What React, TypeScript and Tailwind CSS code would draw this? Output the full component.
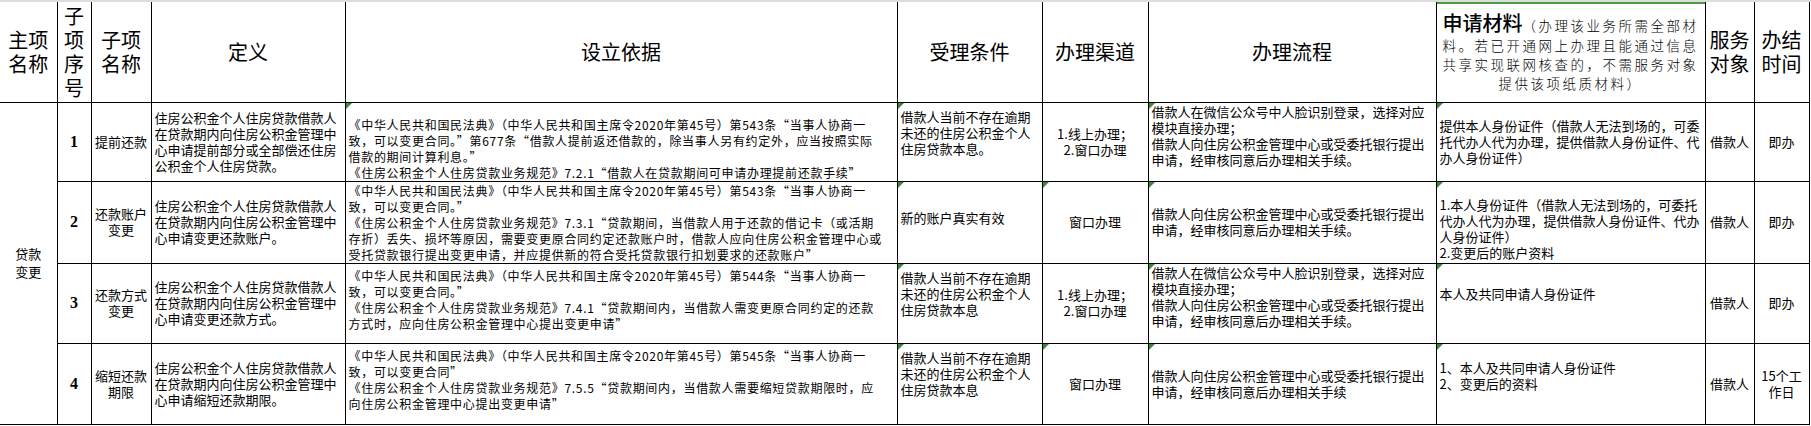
import React from "react";

const sans = "font-['Noto_Sans_CJK_SC','Noto_Sans',sans-serif]";

function Mark() {
  return (
    <span className="absolute left-0 top-0 h-0 w-0 border-t-[6px] border-r-[6px] border-t-[#3a8a35] border-r-transparent" />
  );
}

function Lines({ lines }: { lines: string[] }) {
  return (
    <>
      {lines.map((l, i) => (
        <div key={i} className="whitespace-nowrap">
          {l}
        </div>
      ))}
    </>
  );
}

type Row = {
  no: string;
  name: string[];
  def: string[];
  basis: string[];
  basisAlign: string;
  cond: string[];
  channel: string[];
  channelMark: boolean;
  flow: string[];
  flowAlign: string;
  material: string[];
  matAlign: string;
  time: string[];
  h: string;
};

const rows: Row[] = [
  {
    no: "1",
    name: ["提前还款"],
    def: [
      "住房公积金个人住房贷款借款人",
      "在贷款期内向住房公积金管理中",
      "心申请提前部分或全部偿还住房",
      "公积金个人住房贷款。",
    ],
    basis: [
      "《中华人民共和国民法典》（中华人民共和国主席令2020年第45号）第543条“当事人协商一",
      "致，可以变更合同。”第677条“借款人提前返还借款的，除当事人另有约定外，应当按照实际",
      "借款的期间计算利息。”",
      "《住房公积金个人住房贷款业务规范》7.2.1“借款人在贷款期间可申请办理提前还款手续”",
    ],
    basisAlign: "align-bottom",
    cond: ["借款人当前不存在逾期", "未还的住房公积金个人", "住房贷款本息。"],
    channel: ["1.线上办理；", "2.窗口办理"],
    channelMark: false,
    flow: [
      "借款人在微信公众号中人脸识别登录，选择对应",
      "模块直接办理；",
      "借款人向住房公积金管理中心或受委托银行提出",
      "申请，经审核同意后办理相关手续。",
    ],
    flowAlign: "align-top",
    material: [
      "提供本人身份证件（借款人无法到场的，可委",
      "托代办人代为办理，提供借款人身份证件、代",
      "办人身份证件）",
    ],
    matAlign: "align-middle",
    time: ["即办"],
    h: "h-[79px]",
  },
  {
    no: "2",
    name: ["还款账户", "变更"],
    def: [
      "住房公积金个人住房贷款借款人",
      "在贷款期内向住房公积金管理中",
      "心申请变更还款账户。",
    ],
    basis: [
      "《中华人民共和国民法典》（中华人民共和国主席令2020年第45号）第543条“当事人协商一",
      "致，可以变更合同。”",
      "《住房公积金个人住房贷款业务规范》7.3.1“贷款期间，当借款人用于还款的借记卡（或活期",
      "存折）丢失、损坏等原因，需要变更原合同约定还款账户时，借款人应向住房公积金管理中心或",
      "受托贷款银行提出变更申请，并应提供新的符合受托贷款银行扣划要求的还款账户”",
    ],
    basisAlign: "align-bottom",
    cond: ["新的账户真实有效"],
    channel: ["窗口办理"],
    channelMark: true,
    flow: [
      "借款人向住房公积金管理中心或受委托银行提出",
      "申请，经审核同意后办理相关手续。",
    ],
    flowAlign: "align-middle",
    material: [
      "1.本人身份证件（借款人无法到场的，可委托",
      "代办人代为办理，提供借款人身份证件、代办",
      "人身份证件）",
      "2.变更后的账户资料",
    ],
    matAlign: "align-bottom",
    time: ["即办"],
    h: "h-[82px]",
  },
  {
    no: "3",
    name: ["还款方式", "变更"],
    def: [
      "住房公积金个人住房贷款借款人",
      "在贷款期内向住房公积金管理中",
      "心申请变更还款方式。",
    ],
    basis: [
      "《中华人民共和国民法典》（中华人民共和国主席令2020年第45号）第544条“当事人协商一",
      "致，可以变更合同。”",
      "《住房公积金个人住房贷款业务规范》7.4.1“贷款期间内，当借款人需变更原合同约定的还款",
      "方式时，应向住房公积金管理中心提出变更申请”",
    ],
    basisAlign: "align-top pt-[4px]",
    cond: ["借款人当前不存在逾期", "未还的住房公积金个人", "住房贷款本息"],
    channel: ["1.线上办理；", "2.窗口办理"],
    channelMark: false,
    flow: [
      "借款人在微信公众号中人脸识别登录，选择对应",
      "模块直接办理；",
      "借款人向住房公积金管理中心或受委托银行提出",
      "申请，经审核同意后办理相关手续。",
    ],
    flowAlign: "align-top",
    material: ["本人及共同申请人身份证件"],
    matAlign: "align-middle pb-[18px]",
    time: ["即办"],
    h: "h-[80px]",
  },
  {
    no: "4",
    name: ["缩短还款", "期限"],
    def: [
      "住房公积金个人住房贷款借款人",
      "在贷款期内向住房公积金管理中",
      "心申请缩短还款期限。",
    ],
    basis: [
      "《中华人民共和国民法典》（中华人民共和国主席令2020年第45号）第545条“当事人协商一",
      "致，可以变更合同”",
      "《住房公积金个人住房贷款业务规范》7.5.5“贷款期间内，当借款人需要缩短贷款期限时，应",
      "向住房公积金管理中心提出变更申请”",
    ],
    basisAlign: "align-top pt-[4px]",
    cond: ["借款人当前不存在逾期", "未还的住房公积金个人", "住房贷款本息"],
    channel: ["窗口办理"],
    channelMark: true,
    flow: [
      "借款人向住房公积金管理中心或受委托银行提出",
      "申请，经审核同意后办理相关手续",
    ],
    flowAlign: "align-middle",
    material: ["1、本人及共同申请人身份证件", "2、变更后的资料"],
    matAlign: "align-middle pb-[16px]",
    time: ["15个工", "作日"],
    h: "h-[81px]",
  },
];

const td = "relative overflow-hidden border border-black p-0";
const th = "relative overflow-hidden border border-black border-t-0 p-0 text-center align-middle font-normal";

export default function App() {
  return (
    <div className={`w-[1811px] h-[426px] overflow-hidden bg-white text-black ${sans}`}>
      <div className="h-[2px] bg-[#dcdcdc]" />
      <table className="w-[1809px] table-fixed border-collapse">
        <colgroup>
          <col className="w-[57px]" />
          <col className="w-[34px]" />
          <col className="w-[60px]" />
          <col className="w-[194px]" />
          <col className="w-[552px]" />
          <col className="w-[145px]" />
          <col className="w-[106px]" />
          <col className="w-[288px]" />
          <col className="w-[269px]" />
          <col className="w-[49px]" />
          <col className="w-[55px]" />
        </colgroup>
        <thead>
          <tr className="h-[100px] text-[20px] leading-[24px]">
            <th className={`${th} border-l-0`}>
              主项
              <br />
              名称
            </th>
            <th className={th}>
              子<br />项<br />序<br />号
            </th>
            <th className={th}>
              子项
              <br />
              名称
            </th>
            <th className={th}>定义</th>
            <th className={th}>设立依据</th>
            <th className={th}>受理条件</th>
            <th className={th}>办理渠道</th>
            <th className={th}>办理流程</th>
            <th className={th}>
              <span className="absolute left-0 right-0 top-0 h-[2px] bg-[#4f9a45]" />
              <div className="flex items-baseline justify-center whitespace-nowrap h-[26px]">
                <span className="text-[20px] leading-[26px] font-medium">申请材料</span>
                <span className="text-[13.5px] leading-[26px] font-light tracking-[2.5px]">（办理该业务所需全部材</span>
              </div>
              <div className="text-[13.5px] font-light leading-[19px] tracking-[2.5px] whitespace-nowrap">
                <div>料。若已开通网上办理且能通过信息</div>
                <div>共享实现联网核查的，不需服务对象</div>
                <div>提供该项纸质材料）</div>
              </div>
            </th>
            <th className={`${th} font-medium`}>
              服务
              <br />
              对象
            </th>
            <th className={`${th} font-medium`}>
              办结
              <br />
              时间
            </th>
          </tr>
        </thead>
        <tbody className="text-[13px] leading-[16px]">
          {rows.map((r, i) => (
            <tr key={r.no} className={r.h}>
              {i === 0 && (
                <td rowSpan={4} className={`${td} border-l-0 text-center align-middle leading-[18px]`}>
                  贷款
                  <br />
                  变更
                </td>
              )}
              <td className={`${td} text-center align-middle font-['Liberation_Serif',serif] text-[16px] font-bold`}>
                {r.no}
              </td>
              <td className={`${td} text-center align-middle`}>
                <Lines lines={r.name} />
              </td>
              <td className={`${td} align-middle px-[3px]`}>
                <Lines lines={r.def} />
              </td>
              <td className={`${td} ${r.basisAlign} px-[3px] text-[12px] tracking-[0.7px]`}>
                {i === 0 && <Mark />}
                <Lines lines={r.basis} />
              </td>
              <td className={`${td} align-top px-[3px] pt-[6px]`}>
                <Mark />
                {r.cond.length === 1 ? (
                  <div className="pt-[22px] whitespace-nowrap">{r.cond[0]}</div>
                ) : (
                  <Lines lines={r.cond} />
                )}
              </td>
              <td className={`${td} text-center align-middle`}>
                {r.channelMark && <Mark />}
                <Lines lines={r.channel} />
              </td>
              <td className={`${td} ${r.flowAlign} px-[3px] ${r.flowAlign === "align-top" ? "pt-[1px]" : ""}`}>
                <Mark />
                <Lines lines={r.flow} />
              </td>
              <td className={`${td} ${r.matAlign} px-[3px] ${r.matAlign === "align-bottom" ? "pb-[2px]" : ""}`}>
                <Mark />
                <Lines lines={r.material} />
              </td>
              <td className={`${td} text-center align-middle`}>借款人</td>
              <td className={`${td} text-center align-middle`}>
                <Lines lines={r.time} />
              </td>
            </tr>
          ))}
        </tbody>
      </table>
    </div>
  );
}
